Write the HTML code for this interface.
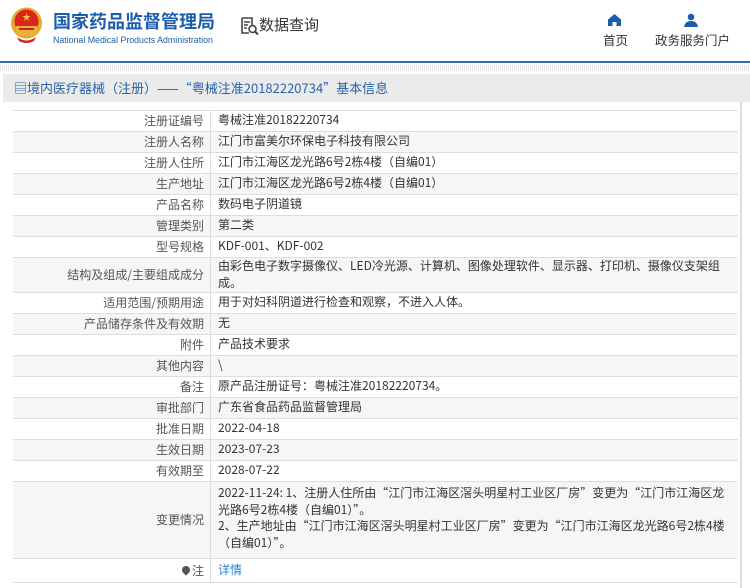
<!DOCTYPE html>
<html><head><meta charset="utf-8"><style>
*{margin:0;padding:0;box-sizing:border-box}
body{width:750px;height:588px;overflow:hidden;background:#fff;font-family:"Noto Sans CJK SC","Liberation Sans",sans-serif;font-size:12px;color:#333;position:relative}
.abs{position:absolute}
.hdr{left:0;top:0;width:750px;height:63px;background:#fff;border-bottom:2px solid #2f6ea5}
.dots{left:0;top:65px;width:750px;height:6px;background:repeating-linear-gradient(90deg,#e4e4e4 0 1px,#fff 1px 2px)}
.band{left:3px;top:74px;width:747px;height:28px;background:#ebebeb;color:#2a62a8;font-size:13px;line-height:28px;padding-left:11px}
.box{left:3px;top:102px;width:739px;height:486px;background:#fff;border-right:2px solid #ddd}
.r{position:absolute;left:13px;width:725px;border-top:1px solid #ddd}
.r.g{background:#f6f6f6}
.l{position:absolute;left:0;top:0;bottom:0;width:198px;border-right:1px solid #ddd;color:#555;text-align:right;padding-right:6px;display:flex;align-items:center;justify-content:flex-end;padding-bottom:1px}
.v{position:absolute;left:205px;right:4px;top:0;bottom:0;display:flex;align-items:center;line-height:16.5px;padding-bottom:1px}
</style></head><body>
<div class="abs hdr">
 <svg class="abs" style="left:10px;top:7px" width="33" height="36" viewBox="0 0 33 36">
  <circle cx="16.5" cy="16" r="15.5" fill="#e8a92a"/>
  <circle cx="16.5" cy="14.5" r="12" fill="#d8261c"/>
  <rect x="6" y="19" width="21" height="9" fill="#e9b13a"/>
  <rect x="9" y="21" width="15" height="2" fill="#c8241a"/>
  <path d="M7 30 Q16.5 37 26 30 L24 34 Q16.5 38 9 34Z" fill="#d8261c"/>
  <polygon points="16.5,6 17.5,9 20.5,9 18,11 19,14 16.5,12 14,14 15,11 12.5,9 15.5,9" fill="#f3c43a"/>
 </svg>
 <div class="abs" style="left:53px;top:9px;font-size:18px;font-weight:bold;color:#1d5eab;line-height:24px">国家药品监督管理局</div>
 <div class="abs" style="left:53px;top:34px;font-family:'Liberation Sans',sans-serif;font-size:8.8px;color:#1d5eab;line-height:12px">National Medical Products Administration</div>
 <svg class="abs" style="left:240px;top:17px" width="19" height="19" viewBox="0 0 19 19"><path d="M2 1h10v7M2 1v15h7M4 5h6M4 8h4M4 11h3" fill="none" stroke="#444" stroke-width="1.6"/><circle cx="12.5" cy="12" r="3.5" fill="none" stroke="#444" stroke-width="1.6"/><path d="M15 14.5l3 3" stroke="#444" stroke-width="2"/></svg>
 <div class="abs" style="left:259px;top:15px;font-size:15px;color:#333;line-height:20px">数据查询</div>
 <svg class="abs" style="left:608px;top:14px" width="13" height="12" viewBox="0 0 13 12"><path d="M6.5 0L0 5.5V12h4.5V8h4v4H13V5.5Z" fill="#1d5eab"/></svg>
 <div class="abs" style="left:603px;top:30px;font-size:12.5px;color:#333">首页</div>
 <svg class="abs" style="left:684px;top:13px" width="14" height="14" viewBox="0 0 14 14"><circle cx="7" cy="4" r="3.3" fill="#1d5eab"/><path d="M0 14Q1 8 7 8Q13 8 14 14Z" fill="#1d5eab"/></svg>
 <div class="abs" style="left:655px;top:30px;font-size:12.5px;color:#333">政务服务门户</div>
</div>
<div class="abs dots"></div>
<div class="abs band">▤境内医疗器械（注册）——“粤械注准20182220734”基本信息</div>
<div class="abs box"></div>

<div class="r" style="top:110px;height:21px"><div class="l">注册证编号</div><div class="v">粤械注准20182220734</div></div>
<div class="r g" style="top:131px;height:21px"><div class="l">注册人名称</div><div class="v">江门市富美尔环保电子科技有限公司</div></div>
<div class="r" style="top:152px;height:21px"><div class="l">注册人住所</div><div class="v">江门市江海区龙光路6号2栋4楼（自编01）</div></div>
<div class="r g" style="top:173px;height:21px"><div class="l">生产地址</div><div class="v">江门市江海区龙光路6号2栋4楼（自编01）</div></div>
<div class="r" style="top:194px;height:21px"><div class="l">产品名称</div><div class="v">数码电子阴道镜</div></div>
<div class="r g" style="top:215px;height:21px"><div class="l">管理类别</div><div class="v">第二类</div></div>
<div class="r" style="top:236px;height:21px"><div class="l">型号规格</div><div class="v">KDF-001、KDF-002</div></div>
<div class="r g" style="top:257px;height:35px"><div class="l">结构及组成/主要组成成分</div><div class="v">由彩色电子数字摄像仪、LED冷光源、计算机、图像处理软件、显示器、打印机、摄像仪支架组成。</div></div>
<div class="r" style="top:292px;height:21px"><div class="l">适用范围/预期用途</div><div class="v">用于对妇科阴道进行检查和观察，不进入人体。</div></div>
<div class="r g" style="top:313px;height:21px"><div class="l">产品储存条件及有效期</div><div class="v">无</div></div>
<div class="r" style="top:334px;height:21px"><div class="l">附件</div><div class="v">产品技术要求</div></div>
<div class="r g" style="top:355px;height:21px"><div class="l">其他内容</div><div class="v">\</div></div>
<div class="r" style="top:376px;height:21px"><div class="l">备注</div><div class="v">原产品注册证号：粤械注准20182220734。</div></div>
<div class="r g" style="top:397px;height:21px"><div class="l">审批部门</div><div class="v">广东省食品药品监督管理局</div></div>
<div class="r" style="top:418px;height:21px"><div class="l">批准日期</div><div class="v">2022-04-18</div></div>
<div class="r g" style="top:439px;height:21px"><div class="l">生效日期</div><div class="v">2023-07-23</div></div>
<div class="r" style="top:460px;height:21px"><div class="l">有效期至</div><div class="v">2028-07-22</div></div>
<div class="r g" style="top:481px;height:77px"><div class="l">变更情况</div><div class="v" style="padding-top:3px;display:block">2022-11-24: 1、注册人住所由“江门市江海区滘头明星村工业区厂房”变更为“江门市江海区龙光路6号2栋4楼（自编01）”。<br>2、生产地址由“江门市江海区滘头明星村工业区厂房”变更为“江门市江海区龙光路6号2栋4楼（自编01）”。</div></div>
<div class="r" style="top:558px;height:25px;border-bottom:1px solid #ddd"><div class="l"><span style="display:inline-block;width:8px;height:8px;border-radius:50% 50% 50% 0;transform:rotate(-45deg);background:#555;margin-right:2px"></span>注</div><div class="v" style="color:#2d7fd0">详情</div></div>
</body></html>
